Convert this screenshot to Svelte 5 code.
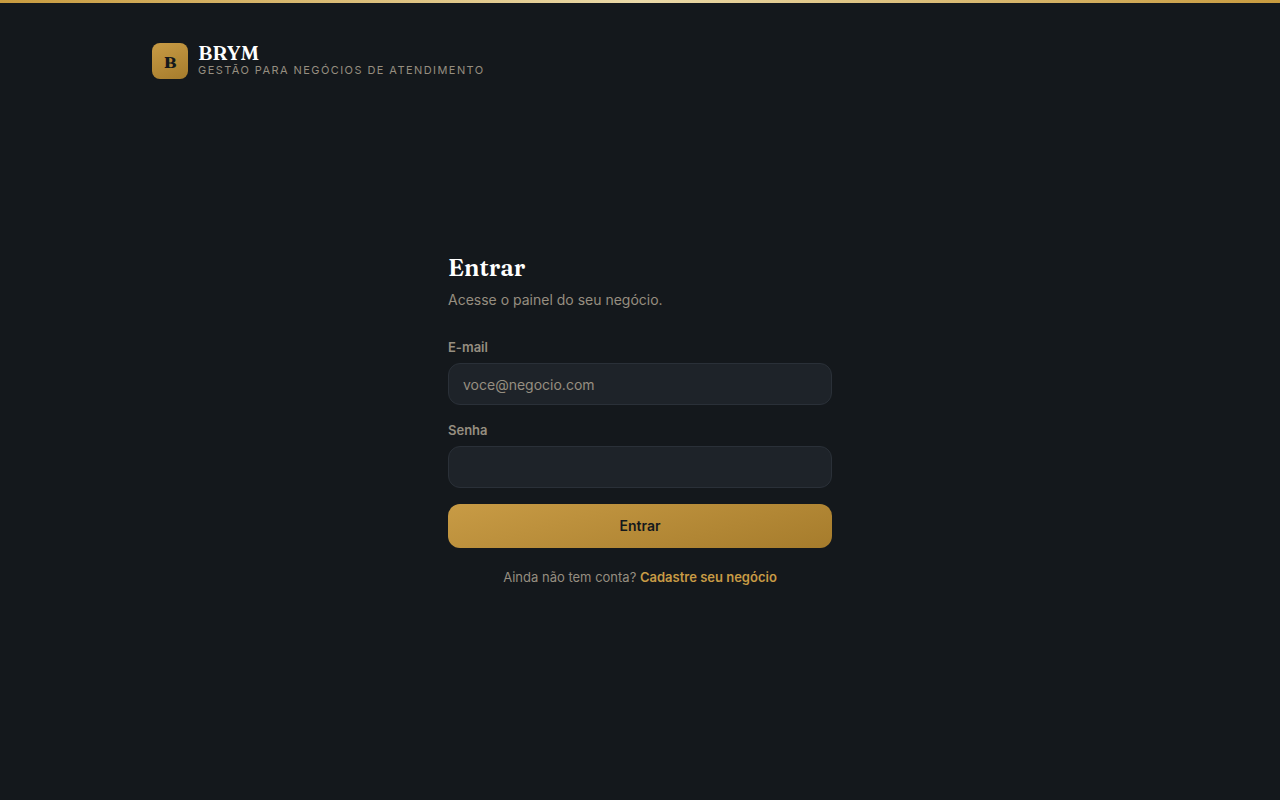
<script lang="ts">
  let email = $state("");
  let password = $state("");

  function submit(event: SubmitEvent) {
    event.preventDefault();
  }
</script>

<div class="page">
  <div class="stripe"></div>
  <div class="shell">
    <header class="brand">
      <div class="mark" aria-hidden="true">B</div>
      <div class="wordmark">
        <div class="name">BRYM</div>
        <div class="tagline">Gestão para negócios de atendimento</div>
      </div>
    </header>

    <main>
      <div class="panel">
        <h1>Entrar</h1>
        <p class="intro">Acesse o painel do seu negócio.</p>

        <form onsubmit={submit}>
          <div class="field">
            <label for="email">E-mail</label>
            <input id="email" type="email" placeholder="voce@negocio.com" autocomplete="email" bind:value={email} />
          </div>
          <div class="field">
            <label for="password">Senha</label>
            <input id="password" type="password" autocomplete="current-password" bind:value={password} />
          </div>
          <button type="submit">Entrar</button>
        </form>

        <p class="signup">Ainda não tem conta? <a href="/cadastro">Cadastre seu negócio</a></p>
      </div>
    </main>
  </div>
</div>

<style>
  :global(body) {
    margin: 0;
    background: #14181c;
    font-family: Inter, "Liberation Sans", sans-serif;
    color: #968e80;
  }

  .page {
    min-height: 100vh;
    display: flex;
    flex-direction: column;
  }
  .stripe {
    height: 3px;
    background: linear-gradient(90deg, #c89b3f, #ead9a8, #c89b3f);
  }
  .shell {
    box-sizing: border-box;
    width: 100%;
    max-width: 1024px;
    margin: 0 auto;
    padding: 40px 24px;
    flex: 1;
    display: flex;
    flex-direction: column;
  }

  .brand {
    display: flex;
    align-items: center;
    gap: 10px;
  }
  .mark {
    width: 36px;
    height: 36px;
    border-radius: 8px;
    display: grid;
    place-items: center;
    background: linear-gradient(160deg, #c89b45, #a67c2c);
    color: #14181c;
    font: 700 17px/25px Fraunces, "Liberation Serif", serif;
  }
  .name {
    color: #fff;
    font: 600 20px/18px Fraunces, "Liberation Serif", serif;
  }
  .tagline {
    font-size: 11px;
    line-height: 16px;
    letter-spacing: 0.13em;
    text-transform: uppercase;
  }

  main {
    flex: 1;
    display: flex;
    align-items: center;
    justify-content: center;
  }
  .panel {
    width: 100%;
    max-width: 384px;
  }
  h1 {
    margin: 0 0 6px;
    color: #fff;
    font: 600 24px/32px Fraunces, "Liberation Serif", serif;
  }
  .intro {
    margin: 0 0 28px;
    font-size: 14px;
    line-height: 20px;
  }

  form {
    display: flex;
    flex-direction: column;
    gap: 16px;
  }
  .field {
    display: flex;
    flex-direction: column;
    gap: 6px;
  }
  label {
    font-size: 13px;
    font-weight: 600;
    line-height: 19px;
  }
  input {
    box-sizing: border-box;
    width: 100%;
    height: 42px;
    padding: 0 14px;
    border: 1px solid #2a3038;
    border-radius: 12px;
    background: #1e2329;
    color: #fff;
    font: 400 14px/20px Inter, "Liberation Sans", sans-serif;
  }
  input::placeholder {
    color: #968e80;
    opacity: 1;
  }
  input:focus {
    outline: none;
    border-color: #c89b45;
  }
  button {
    height: 44px;
    border: 0;
    border-radius: 12px;
    background: linear-gradient(165deg, #c89b45, #a67c2c);
    color: #14181c;
    font: 600 14px/20px Inter, "Liberation Sans", sans-serif;
    cursor: pointer;
  }

  .signup {
    margin: 20px 0 0;
    font-size: 13px;
    line-height: 19px;
    text-align: center;
  }
  a {
    color: #c89b45;
    font-weight: 600;
    text-decoration: none;
  }
</style>
